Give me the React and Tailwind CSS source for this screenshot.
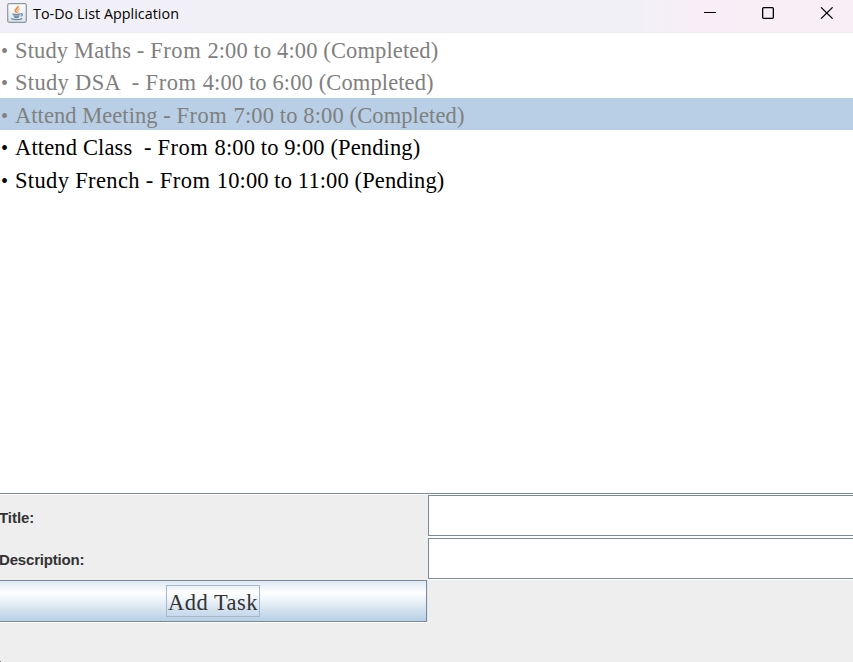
import React from "react";

const tasks = [
  { name: "Study Maths - ", time: "2:00 to 4:00 (Completed)", done: true, row: "h-[33px] pt-0.5", gap: "tracking-[0.15px]" },
  { name: "Study DSA  - ", time: "4:00 to 6:00 (Completed)", done: true, row: "h-8 pt-px", gap: "tracking-[0.33px]" },
  { name: "Attend Meeting - ", time: "7:00 to 8:00 (Completed)", done: true, selected: true, row: "h-8 pt-0.5", gap: "tracking-[0.05px]" },
  { name: "Attend Class  - ", time: "8:00 to 9:00 (Pending)", done: false, row: "h-[33px] pt-0.5", gap: "tracking-[0.15px]" },
  { name: "Study French - ", time: "10:00 to 11:00 (Pending)", done: false, row: "h-8 pt-0.5", gap: "tracking-[0.35px]" },
];

function JavaIcon() {
  return (
    <svg width="20" height="20" viewBox="0 0 20 20" fill="none">
      <defs>
        <linearGradient id="tile" x1="0" y1="0" x2="0" y2="1">
          <stop offset="0" stopColor="#fff" />
          <stop offset="1" stopColor="#dce3e9" />
        </linearGradient>
      </defs>
      <rect x="0.7" y="0.7" width="18.6" height="18.6" rx="1.5" fill="url(#tile)" stroke="#8997a3" strokeWidth="1.2" />
      <path d="M11 3C11.6 5.3 7.7 6 8.4 8c.3.8 1 1.2 1.2 1.8" stroke="#ee8a36" strokeWidth="1.8" />
      <path d="M12.8 5.8C10 6.8 10.8 7.8 11 8.3c.2.7-.4 1.2-.8 1.6" stroke="#f0a15f" strokeWidth="1.1" />
      <path d="M5.4 10.8c1.8.7 5.8.7 7.6 0M6.5 12.6c1.8.7 4.2.7 5.9 0M7.2 14.2c1.5.5 3 .5 4.5 0M4.2 15.5c2 1.6 8.8 1.6 11 0M13.4 10.8c2.5-.5 2.6 1.8.2 2.4" stroke="#6b8ca6" strokeWidth="1.3" />
    </svg>
  );
}

function TitleBar() {
  return (
    <header className="flex h-[33px] items-start justify-between border-b border-[#eeecef] bg-linear-to-r from-[#f2f0f7] from-75% to-[#f9edf6] to-86%">
      <div className="flex items-start pl-[7px] pt-[3px]">
        <JavaIcon />
        <h1 className="ml-1.5 pt-px font-['Open_Sans','Noto_Sans',sans-serif] text-[14.3px] leading-5 tracking-[0.04px] text-black">To-Do List Application</h1>
      </div>
      <div className="flex gap-[46px] pr-5 pt-[7px]">
        <svg width="12" height="12" shapeRendering="crispEdges"><path d="M0 5.5H12" stroke="#000" /></svg>
        <svg width="12" height="12" fill="none"><rect x=".65" y=".65" width="10.7" height="10.7" rx="1" stroke="#000" strokeWidth="1.3" /></svg>
        <svg width="13" height="12"><path d="M1 .3L12.6 11.7M12.6 .3L1 11.7" stroke="#000" strokeWidth="1.15" /></svg>
      </div>
    </header>
  );
}

function TaskRow({ task }) {
  return (
    <li className={`flex items-start whitespace-pre ${task.row} ${task.selected ? "bg-[#b8cfe5]" : ""} ${task.done ? "text-[#808080]" : "text-black"}`}>
      <span className="w-[15px] shrink-0 pl-px text-[20px]">•</span>
      <span className={task.gap}>{task.name}</span>
      <span className="tracking-[0.55px]">{"From "}</span>
      <span className="tracking-[0.12px]">{task.time}</span>
    </li>
  );
}

function Field() {
  return <input className="block h-[41px] w-full border-y border-l border-[#7a8a99] bg-white outline-none" />;
}

export default function App() {
  return (
    <main className="flex h-[662px] w-[853px] flex-col overflow-hidden bg-[#eeeeee]">
      <TitleBar />
      <ul className="h-[461px] border-b border-[#7a8a99] bg-white font-['Liberation_Serif',serif] text-[22.5px] leading-8">
        {tasks.map((task) => <TaskRow key={task.name} task={task} />)}
      </ul>
      <div className="h-px bg-white" />
      <section className="flex h-[166px]">
        <div className="w-[428px] font-['Liberation_Sans',sans-serif] text-[15px] font-bold text-[#333333]">
          <div className="flex h-[42px] items-center pt-1"><label className="-ml-px tracking-[-0.05px]">Title:</label></div>
          <div className="flex h-[43px] items-center pt-[3px]"><label className="-ml-px tracking-[-0.18px]">Description:</label></div>
          <div className="flex h-[43px] border-b border-r border-b-white border-r-[#dce7f1]">
            <button className="flex h-[42px] w-[427px] items-center justify-center border-y border-r border-[#7a8a99] bg-linear-to-b from-[#dfe9f3] via-white via-30% to-[#b8cfe5] font-['Liberation_Serif',serif] text-[22.5px] font-normal">
              <span className="flex h-8 w-[94px] items-center justify-center border border-[#a3b8cc] pt-[3px] tracking-[0.5px]">Add Task</span>
            </button>
          </div>
        </div>
        <div className="flex-1">
          <Field />
          <div className="h-0.5 bg-white" />
          <Field />
          <div className="h-px bg-white" />
        </div>
      </section>
      <div className="size-px bg-[#777777]" />
    </main>
  );
}
